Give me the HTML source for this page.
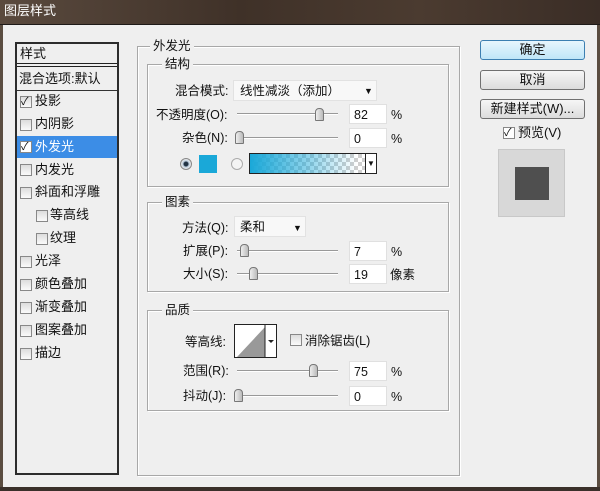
<!DOCTYPE html>
<html><head><meta charset="utf-8"><style>
*{margin:0;padding:0;box-sizing:border-box}
body{width:600px;height:491px;overflow:hidden;background:#efefef;position:relative;font-family:"Liberation Sans","Noto Sans CJK SC",sans-serif;font-size:12.5px;color:#111}
.a{position:absolute}
.t{position:absolute;white-space:nowrap;line-height:14px}
.cb{position:absolute;width:12px;height:12px;border:1px solid #888;background:linear-gradient(#ddd,#fafafa)}
.grp{position:absolute;border:1px solid #a8a8a8;box-shadow:1px 1px 0 #fff inset,1px 1px 0 #fff}
.lbl{position:absolute;background:#efefef;padding:0 3px;line-height:14px}
.sl{position:absolute;height:2px;border-top:1px solid #999;border-bottom:1px solid #fff;width:101px}
.th{position:absolute;width:9px;height:13px;border:1px solid #777;border-radius:4px 4px 1px 1px;background:linear-gradient(90deg,#eee,#bbb)}
.in{position:absolute;width:38px;height:20px;background:#fff;border:1px solid #e0e0e0;padding:3px 0 0 4px;line-height:14px}
.btn{position:absolute;left:480px;width:105px;height:20px;border:1px solid #707070;border-radius:3px;background:linear-gradient(#f6f6f6,#dcdcdc);text-align:center;line-height:18px;font-size:13px}
</style></head><body>
<div class="a" style="left:0;top:0;width:600px;height:24px;background:linear-gradient(90deg,#5a4a3e,#3f3128 40%,#4b3b30 70%,#3a2d26)"></div>
<div class="t" style="left:4px;top:4px;color:#fff;font-size:13px">图层样式</div>
<div class="a" style="left:0;top:24px;width:600px;height:1px;background:#1e1a18"></div>
<div class="a" style="left:0;top:25px;width:3px;height:466px;background:#5a4c40"></div>
<div class="a" style="left:597px;top:25px;width:3px;height:466px;background:#5a4c40"></div>
<div class="a" style="left:0;top:487px;width:600px;height:4px;background:#3a302a"></div>

<div class="a" style="left:15px;top:42px;width:104px;height:433px;border:2px solid #2c2c2c;background:#efefef"></div>
<div class="a" style="left:17px;top:63px;width:100px;height:4px;border-top:1px solid #222;border-bottom:1px solid #222"></div>
<div class="a" style="left:17px;top:90px;width:100px;height:1px;background:#333"></div>
<div class="t" style="left:20px;top:47px;font-size:13px">样式</div>
<div class="t" style="left:19px;top:72px;font-size:13px">混合选项:默认</div>
<div class="a" style="left:17px;top:136px;width:100px;height:22px;background:#3c8de6"></div>
<div class="cb" style="left:20px;top:96px"></div><div class="t" style="left:21px;top:95px;font-size:11px">✓</div>
<div class="t" style="left:35px;top:94px;font-size:13px">投影</div>
<div class="cb" style="left:20px;top:119px"></div><div class="t" style="left:35px;top:117px;font-size:13px">内阴影</div>
<div class="cb" style="left:20px;top:141px;background:#fff"></div><div class="t" style="left:21px;top:140px;font-size:11px">✓</div>
<div class="t" style="left:35px;top:140px;font-size:13px;color:#fff">外发光</div>
<div class="cb" style="left:20px;top:164px"></div><div class="t" style="left:35px;top:163px;font-size:13px">内发光</div>
<div class="cb" style="left:20px;top:187px"></div><div class="t" style="left:35px;top:185px;font-size:13px">斜面和浮雕</div>
<div class="cb" style="left:36px;top:210px"></div><div class="t" style="left:50px;top:208px;font-size:13px">等高线</div>
<div class="cb" style="left:36px;top:233px"></div><div class="t" style="left:50px;top:231px;font-size:13px">纹理</div>
<div class="cb" style="left:20px;top:256px"></div><div class="t" style="left:35px;top:254px;font-size:13px">光泽</div>
<div class="cb" style="left:20px;top:279px"></div><div class="t" style="left:35px;top:277px;font-size:13px">颜色叠加</div>
<div class="cb" style="left:20px;top:302px"></div><div class="t" style="left:35px;top:300px;font-size:13px">渐变叠加</div>
<div class="cb" style="left:20px;top:325px"></div><div class="t" style="left:35px;top:323px;font-size:13px">图案叠加</div>
<div class="cb" style="left:20px;top:348px"></div><div class="t" style="left:35px;top:346px;font-size:13px">描边</div>

<div class="grp" style="left:137px;top:46px;width:323px;height:430px"></div>
<div class="lbl" style="left:150px;top:39px">外发光</div>
<div class="grp" style="left:147px;top:64px;width:302px;height:123px"></div>
<div class="lbl" style="left:162px;top:57px">结构</div>
<div class="grp" style="left:147px;top:202px;width:302px;height:90px"></div>
<div class="lbl" style="left:162px;top:195px">图素</div>
<div class="grp" style="left:147px;top:310px;width:302px;height:101px"></div>
<div class="lbl" style="left:162px;top:303px">品质</div>

<div class="t" style="left:175px;top:84px">混合模式:</div>
<div class="a" style="left:233px;top:80px;width:144px;height:21px;background:#f8f8f8;border:1px solid #e2e2e2"></div>
<div class="t" style="left:240px;top:84px">线性减淡（添加）</div>
<div class="t" style="left:364px;top:84px;font-size:9px">▼</div>
<div class="t" style="left:156px;top:108px">不透明度(O):</div>
<div class="sl" style="left:237px;top:113px"></div><div class="th" style="left:315px;top:108px"></div>
<div class="in" style="left:349px;top:104px">82</div><div class="t" style="left:391px;top:108px">%</div>
<div class="t" style="left:182px;top:131px">杂色(N):</div>
<div class="sl" style="left:237px;top:137px"></div><div class="th" style="left:235px;top:131px"></div>
<div class="in" style="left:349px;top:128px">0</div><div class="t" style="left:391px;top:132px">%</div>
<div class="a" style="left:180px;top:158px;width:12px;height:12px;border-radius:50%;border:1px solid #888;background:radial-gradient(#234 0 2px,#bcd 3px,#eee 5px)"></div>
<div class="a" style="left:199px;top:155px;width:18px;height:18px;background:#1aa8d8"></div>
<div class="a" style="left:231px;top:158px;width:12px;height:12px;border-radius:50%;border:1px solid #aaa;background:#f4f4f4"></div>
<div class="a" style="left:249px;top:153px;width:128px;height:21px;border:1px solid #222;background:linear-gradient(90deg,#1aa8d8,rgba(26,168,216,.5) 45%,rgba(26,168,216,0) 85%),repeating-conic-gradient(#cfcfcf 0 25%,#fff 0 50%) 0 0/8px 8px"></div>
<div class="a" style="left:365px;top:154px;width:11px;height:19px;background:#fff;border-left:1px solid #222"></div>
<div class="t" style="left:367px;top:157px;font-size:8px">▼</div>

<div class="t" style="left:182px;top:221px">方法(Q):</div>
<div class="a" style="left:234px;top:216px;width:72px;height:21px;background:#f8f8f8;border:1px solid #e2e2e2"></div>
<div class="t" style="left:240px;top:220px">柔和</div><div class="t" style="left:293px;top:221px;font-size:9px">▼</div>
<div class="t" style="left:183px;top:244px">扩展(P):</div>
<div class="sl" style="left:237px;top:250px"></div><div class="th" style="left:240px;top:244px"></div>
<div class="in" style="left:349px;top:241px">7</div><div class="t" style="left:391px;top:245px">%</div>
<div class="t" style="left:183px;top:267px">大小(S):</div>
<div class="sl" style="left:237px;top:273px"></div><div class="th" style="left:249px;top:267px"></div>
<div class="in" style="left:349px;top:264px">19</div><div class="t" style="left:390px;top:268px">像素</div>

<div class="t" style="left:185px;top:335px">等高线:</div>
<div class="a" style="left:234px;top:324px;width:43px;height:34px;border:1px solid #222;background:#fff;overflow:hidden">
<svg width="43" height="34" style="position:absolute;left:0;top:0"><polygon points="2,32 30,2 30,32" fill="#999"/><line x1="30" y1="0" x2="30" y2="34" stroke="#222"/><polygon points="33,15 39,15 36,18" fill="#222"/></svg></div>
<div class="cb" style="left:290px;top:334px"></div>
<div class="t" style="left:305px;top:334px">消除锯齿(L)</div>
<div class="t" style="left:183px;top:364px">范围(R):</div>
<div class="sl" style="left:237px;top:370px"></div><div class="th" style="left:309px;top:364px"></div>
<div class="in" style="left:349px;top:361px">75</div><div class="t" style="left:391px;top:365px">%</div>
<div class="t" style="left:183px;top:389px">抖动(J):</div>
<div class="sl" style="left:237px;top:395px"></div><div class="th" style="left:234px;top:389px"></div>
<div class="in" style="left:349px;top:386px">0</div><div class="t" style="left:391px;top:390px">%</div>

<div class="btn" style="top:40px;border-color:#3c7fb1;background:linear-gradient(#e8f6fd,#bfe6f8)">确定</div>
<div class="btn" style="top:70px">取消</div>
<div class="btn" style="top:99px">新建样式(W)...</div>
<div class="cb" style="left:503px;top:127px;background:#fff"></div><div class="t" style="left:504px;top:126px;font-size:11px">✓</div>
<div class="t" style="left:518px;top:126px;font-size:13px">预览(V)</div>
<div class="a" style="left:498px;top:149px;width:67px;height:68px;background:#d8d8d8;border:1px solid #c8c8c8"></div>
<div class="a" style="left:515px;top:167px;width:34px;height:33px;background:#4f4f4f"></div>
</body></html>
